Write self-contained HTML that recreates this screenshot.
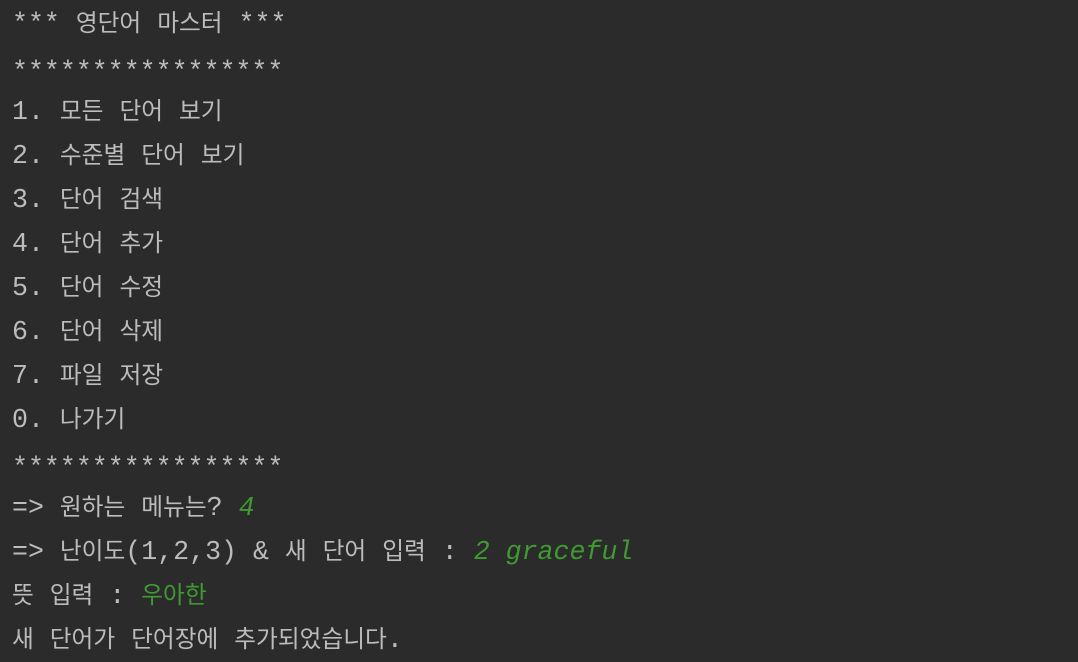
<!DOCTYPE html>
<html><head><meta charset="utf-8"><style>
html,body{margin:0;padding:0;background:#2b2b2b;width:1078px;height:662px;overflow:hidden}
.c{position:absolute;left:12px;top:2px;font-family:"Liberation Mono","Noto Sans CJK KR",monospace;font-size:26.6px;line-height:44px;color:#bcbcbc;white-space:pre}
.c div{height:44px;overflow:visible}
.a{position:relative;top:4px}
.k{font-family:"Noto Sans CJK KR","NanumGothic",sans-serif;font-size:23.7px;line-height:1;letter-spacing:0}
.g{color:#3f9a32}
.i{font-style:italic}
</style></head><body><div class="c"><div>*** <span class="k">영단어</span> <span class="k">마스터</span> ***</div><div><span class="a">*****************</span></div><div>1. <span class="k">모든</span> <span class="k">단어</span> <span class="k">보기</span></div><div>2. <span class="k">수준별</span> <span class="k">단어</span> <span class="k">보기</span></div><div>3. <span class="k">단어</span> <span class="k">검색</span></div><div>4. <span class="k">단어</span> <span class="k">추가</span></div><div>5. <span class="k">단어</span> <span class="k">수정</span></div><div>6. <span class="k">단어</span> <span class="k">삭제</span></div><div>7. <span class="k">파일</span> <span class="k">저장</span></div><div>0. <span class="k">나가기</span></div><div><span class="a">*****************</span></div><div>=&gt; <span class="k">원하는</span> <span class="k">메뉴는</span>? <span class="g i">4</span></div><div>=&gt; <span class="k">난이도</span>(1,2,3) &amp; <span class="k">새</span> <span class="k">단어</span> <span class="k">입력</span> : <span class="g i">2 graceful</span></div><div><span class="k">뜻</span> <span class="k">입력</span> : <span class="g k">우아한</span></div><div><span class="k">새</span> <span class="k">단어가</span> <span class="k">단어장에</span> <span class="k">추가되었습니다</span>.</div></div></body></html>
